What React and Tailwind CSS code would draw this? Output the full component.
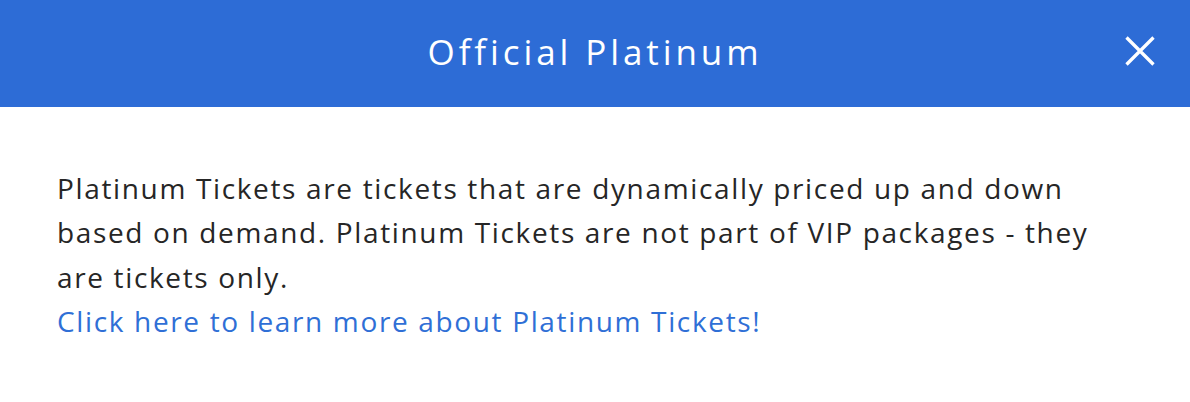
export default function App() {
  return (
    <div className="w-[1190px] h-[402px] bg-white font-['Open_Sans',sans-serif]">
      <div className="relative h-[107px] bg-[#2d6cd6] flex items-center justify-center">
        <h1 className="text-white text-[35px] tracking-[3.9px] font-normal leading-none -mt-[5px]">Official Platinum</h1>
        <button className="absolute right-[35px] top-[36px] w-[30px] h-[30px] flex items-center justify-center">
          <svg width="30" height="30" viewBox="0 0 30 30" fill="none" stroke="white" strokeWidth="3.3">
            <path d="M1.5 1.5 L28.5 28.5 M28.5 1.5 L1.5 28.5" />
          </svg>
        </button>
      </div>
      <div className="px-[57px] pt-[59px] text-[28px] tracking-[1.65px] leading-[44.3px] text-[#262626]">
        <p>
          Platinum Tickets are tickets that are dynamically priced up and down based on demand. Platinum Tickets are not part of VIP packages - they are tickets only.
        </p>
        <a className="block text-[#2f6fd6]" href="#">Click here to learn more about Platinum Tickets!</a>
      </div>
    </div>
  );
}
